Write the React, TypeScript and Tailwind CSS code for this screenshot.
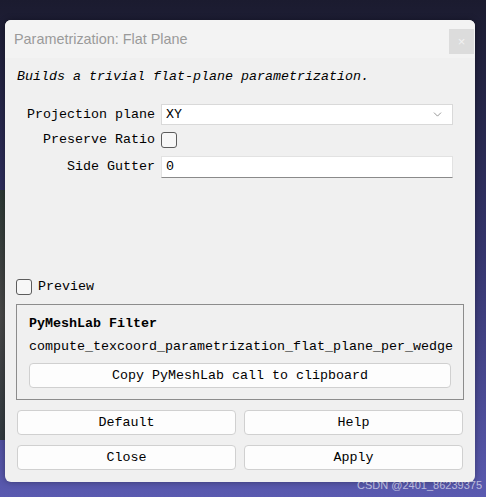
import { ChevronDown } from "lucide-react";

const mono = "font-['Liberation_Mono',monospace] text-[13.33px] text-black";

function Check({ className = "" }: { className?: string }) {
  return (
    <span
      className={`block h-[16px] w-[16px] rounded-[3px] border border-[#5c5c5c] bg-[#f7f7f7] ${className}`}
    />
  );
}

function Button({ label, className = "" }: { label: string; className?: string }) {
  return (
    <button
      type="button"
      className={`flex h-[25px] items-center justify-center rounded-[4px] border border-[#d0d0d0] bg-[#fdfdfd] ${mono} ${className}`}
    >
      {label}
    </button>
  );
}

export default function App() {
  return (
    <div className="relative h-[497px] w-[486px] overflow-hidden bg-linear-to-b from-[#1b1b2f] via-[#34346c] to-[#5a5ab0] pl-[5px] pt-[20px]">
      {/* scenery peeking out at the left edge */}
      <div className="absolute left-0 top-[190px] h-[250px] w-[6px] bg-linear-to-b from-[#2c3a2a] via-[#4a4a3a] to-[#2a3328] opacity-80" />

      <div className="relative flex h-[462px] w-[470px] flex-col overflow-hidden rounded-[6px] bg-[#f0f0f0] shadow-[0_0_6px_rgba(0,0,0,0.35)]">
        {/* title bar */}
        <div className="flex h-[38px] items-start justify-between bg-[#f3f3f3] pl-[9px] pr-[1px]">
          <span className="mt-[10px] font-['Liberation_Sans',Arial,sans-serif] text-[14.4px] leading-[18px] text-[#9a9a9a]">
            Parametrization: Flat Plane
          </span>
          <span className="mt-[9px] flex h-[25px] w-[25px] items-center justify-center bg-[#dcdcdc] font-['Liberation_Sans',sans-serif] text-[13px] text-[#f2f2f2]">
            ×
          </span>
        </div>

        <div className="flex flex-1 flex-col px-[12px] pb-[12px]">
          <p className={`mt-[10px] h-[18px] leading-[18px] italic ${mono}`}>
            Builds a trivial flat-plane parametrization.
          </p>

          <div className="mt-[18px] flex flex-col">
            <div className="flex h-[21px] items-center gap-[6px]">
              <span className={`w-[138px] text-right ${mono}`}>Projection plane</span>
              <div className="flex h-[21px] w-[292px] items-center justify-between border border-[#d9d9d9] bg-white pl-[4px] pr-[8px]">
                <span className={mono}>XY</span>
                <ChevronDown className="size-[13px] text-[#666]" strokeWidth={1.25} />
              </div>
            </div>

            <div className="mt-[7px] flex h-[16px] items-center gap-[6px]">
              <span className={`w-[138px] text-right ${mono}`}>Preserve Ratio</span>
              <Check />
            </div>

            <div className="mt-[8px] flex h-[22px] items-center gap-[6px]">
              <span className={`w-[138px] text-right ${mono}`}>Side Gutter</span>
              <div className="flex h-[22px] w-[292px] items-center border border-[#e2e2e2] border-b-[#8a8a8a] bg-white pl-[4px]">
                <span className={mono}>0</span>
              </div>
            </div>
          </div>

          <label className="ml-[-1px] mt-[101px] flex h-[16px] items-center gap-[6px]">
            <Check />
            <span className={mono}>Preview</span>
          </label>

          <div className="ml-[-1px] mr-[-1px] mt-[9px] flex flex-col border border-[#8c8c8c] px-[12px] pb-[11px] pt-[11px]">
            <span className={`h-[16px] leading-[16px] font-bold ${mono}`}>PyMeshLab Filter</span>
            <span className={`mt-[7px] h-[16px] leading-[16px] ${mono}`}>
              compute_texcoord_parametrization_flat_plane_per_wedge
            </span>
            <Button label="Copy PyMeshLab call to clipboard" className="mt-[8px]" />
          </div>

          <div className="mt-[10px] grid grid-cols-2 gap-x-[8px] gap-y-[10px]">
            <Button label="Default" />
            <Button label="Help" />
            <Button label="Close" />
            <Button label="Apply" />
          </div>
        </div>
      </div>

      <span className="absolute bottom-[4px] right-[4px] font-['Liberation_Sans',Arial,sans-serif] text-[11px] text-white/60">
        CSDN @2401_86239375
      </span>
    </div>
  );
}
